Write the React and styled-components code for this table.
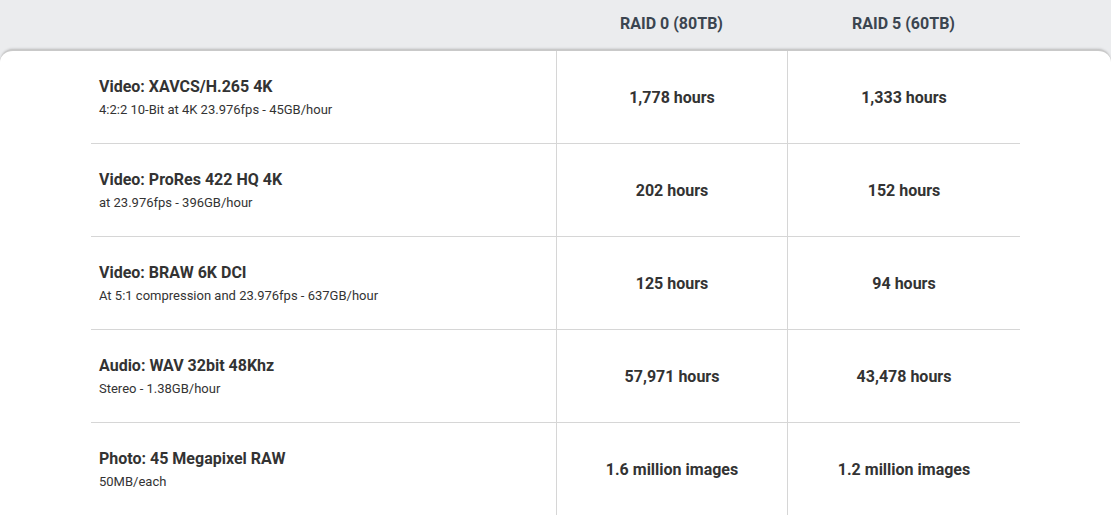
import React from "react";
import styled, { createGlobalStyle } from "styled-components";

const Global = createGlobalStyle`
  html, body { margin: 0; padding: 0; }
  body {
    background: #ebecee;
    font-family: Roboto, "Liberation Sans", Arial, sans-serif;
    -webkit-font-smoothing: antialiased;
  }
`;

const Page = styled.div`
  width: 1111px;
  height: 515px;
  overflow: hidden;
  background: #ebecee;
`;

const Columns = `
  display: grid;
  grid-template-columns: 465px 231px 233px;
  width: 929px;
  margin: 0 auto;
`;

const HeaderRow = styled.div`
  ${Columns}
  height: 49px;
  align-items: center;
`;

const HeaderCell = styled.div`
  text-align: center;
  font-size: 16px;
  font-weight: 700;
  color: #3b4550;
  padding-bottom: 3px;
`;

const Card = styled.div`
  background: #fff;
  border-radius: 13px 13px 0 0;
  border-top: 2px solid #c9c9c9;
  box-shadow: 0 -1px 2px rgba(0, 0, 0, 0.1);
  min-height: 464px;
`;

const Row = styled.div`
  ${Columns}
  height: 93px;
  box-sizing: border-box;
  border-bottom: ${(p) => (p.$last ? "none" : "1px solid #d6d6d6")};
`;

const LabelCell = styled.div`
  display: flex;
  flex-direction: column;
  justify-content: center;
  padding-left: 8px;
  gap: 4px;
`;

const Title = styled.div`
  font-size: 16px;
  font-weight: 700;
  color: #333;
  line-height: 20px;
`;

const Sub = styled.div`
  font-size: 13px;
  color: #333;
  line-height: 17px;
`;

const ValueCell = styled.div`
  display: flex;
  align-items: center;
  justify-content: center;
  border-left: ${(p) => (p.$divider ? "1px solid #d6d6d6" : "none")};
  font-size: 16px;
  font-weight: 700;
  color: #333;
`;

const rows = [
  ["Video: XAVCS/H.265 4K", "4:2:2 10-Bit at 4K 23.976fps - 45GB/hour", "1,778 hours", "1,333 hours"],
  ["Video: ProRes 422 HQ 4K", "at 23.976fps - 396GB/hour", "202 hours", "152 hours"],
  ["Video: BRAW 6K DCI", "At 5:1 compression and 23.976fps - 637GB/hour", "125 hours", "94 hours"],
  ["Audio: WAV 32bit 48Khz", "Stereo - 1.38GB/hour", "57,971 hours", "43,478 hours"],
  ["Photo: 45 Megapixel RAW", "50MB/each", "1.6 million images", "1.2 million images"],
];

export default function App() {
  return (
    <Page>
      <Global />
      <HeaderRow>
        <div />
        <HeaderCell>RAID 0 (80TB)</HeaderCell>
        <HeaderCell>RAID 5 (60TB)</HeaderCell>
      </HeaderRow>
      <Card>
        {rows.map((r, i) => (
          <Row key={i} $last={i === rows.length - 1}>
            <LabelCell>
              <Title>{r[0]}</Title>
              <Sub>{r[1]}</Sub>
            </LabelCell>
            <ValueCell $divider>{r[2]}</ValueCell>
            <ValueCell $divider>{r[3]}</ValueCell>
          </Row>
        ))}
      </Card>
    </Page>
  );
}
